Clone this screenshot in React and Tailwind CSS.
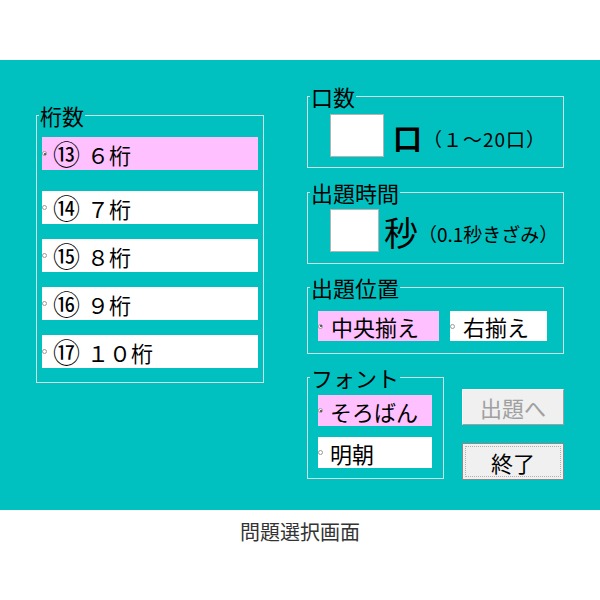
const font = "font-['Noto_Sans_CJK_JP','Noto_Sans_CJK_SC',sans-serif]";

function Dot({ on }) {
  return (
    <span className="flex h-[5px] w-[5px] shrink-0 items-center justify-center rounded-full border border-[#9a9a9a] bg-white">
      {on && <span className="h-[2px] w-[2px] rounded-full bg-[#333]" />}
    </span>
  );
}

function Option({ label, num, on, className = "", textGap = "ml-[6px]" }) {
  return (
    <div className={`flex items-center ${on ? "bg-[#ffc0ff]" : "bg-white"} ${className}`}>
      <Dot on={on} />
      <span className={`${textGap} flex items-center text-[22px] leading-none text-black`}>
        {num && <span className="mr-[7px] text-[27px] leading-none">{num}</span>}
        {label}
      </span>
    </div>
  );
}

function Group({ title, className = "", inner = "", children }) {
  return (
    <fieldset className={`border border-[#cfdede] ${className}`}>
      <legend className="ml-[2px] px-[1px] text-[22px] leading-[24px] text-black">{title}</legend>
      <div className={inner}>{children}</div>
    </fieldset>
  );
}

export default function App() {
  const digits = [
    { num: "⑬", label: "６桁", on: true },
    { num: "⑭", label: "７桁" },
    { num: "⑮", label: "８桁" },
    { num: "⑯", label: "９桁" },
    { num: "⑰", label: "１０桁" },
  ];

  return (
    <div className={`w-[600px] bg-white ${font}`}>
      <div className="h-[60px]" />

      <div className="flex h-[450px] items-start bg-[#00c0c0] pl-[36px] pt-[24px]">
        {/* 桁数 */}
        <Group title="桁数" className="mt-[19px] w-[228px]" inner="px-[5px] pb-[14px] pt-[10px]">
          <div className="flex flex-col">
            {digits.map((d, i) => (
              <Option
                key={d.num}
                num={d.num}
                label={d.label}
                on={d.on}
                className={`h-[33px] ${i === 1 ? "mt-[21px]" : i > 1 ? "mt-[15px]" : ""}`}
              />
            ))}
          </div>
        </Group>

        <div className="ml-[43px] flex flex-col">
          {/* 口数 */}
          <Group title="口数" className="w-[257px]" inner="pb-[10px] pl-[22px] pt-[6px]">
            <div className="flex items-center">
              <div className="h-[43px] w-[54px] border border-[#b4b4b4] bg-white" />
              <span className="ml-[9px] mt-[4px] text-[29px] font-bold leading-none">口</span>
              <span className="ml-[1px] mt-[5px] text-[19px] leading-none tracking-[1px]">（１～20口）</span>
            </div>
          </Group>

          {/* 出題時間 */}
          <Group title="出題時間" className="mt-[12px] w-[257px]" inner="pb-[11px] pl-[22px] pt-[5px]">
            <div className="flex items-center">
              <div className="h-[43px] w-[49px] border border-[#b4b4b4] bg-white" />
              <span className="ml-[5px] mt-[3px] text-[34px] leading-none">秒</span>
              <span className="mt-[5px] text-[19px] leading-none">（0.1秒きざみ）</span>
            </div>
          </Group>

          {/* 出題位置 */}
          <Group title="出題位置" className="mt-[11px] w-[257px]" inner="pb-[12px] pl-[10px] pt-[12px]">
            <div className="flex gap-[11px]">
              <Option label="中央揃え" on className="h-[30px] w-[121px]" textGap="ml-[8px]" />
              <Option label="右揃え" className="h-[30px] w-[97px]" textGap="ml-[8px]" />
            </div>
          </Group>

          <div className="mt-[11px] flex items-start">
            {/* フォント */}
            <Group title="フォント" className="w-[137px]" inner="pb-[10px] pl-[10px] pt-[6px]">
              <div className="flex flex-col gap-[11px]">
                <Option label="そろばん" on className="h-[31px] w-[114px]" textGap="ml-[7px]" />
                <Option label="明朝" className="h-[31px] w-[114px]" textGap="ml-[7px]" />
              </div>
            </Group>

            <div className="ml-[18px] mt-[24px] flex flex-col gap-[18px]">
              <button
                disabled
                className="flex h-[36px] w-[102px] items-center justify-center border border-t-white border-l-white border-r-[#a0a0a0] border-b-[#a0a0a0] bg-[#f0f0f0] text-[22px] leading-none text-[#a0a0a0]"
              >
                出題へ
              </button>
              <button className="flex h-[37px] w-[102px] items-center justify-center border border-[#8a8a8a] bg-[#f0f0f0] p-[2px] text-[22px] leading-none text-black">
                <span className="flex h-full w-full items-center justify-center border border-dotted border-[#b0b0b0]">
                  終了
                </span>
              </button>
            </div>
          </div>
        </div>
      </div>

      <div className="mt-[8px] text-center text-[20px] leading-[28px] text-[#333]">問題選択画面</div>
    </div>
  );
}
